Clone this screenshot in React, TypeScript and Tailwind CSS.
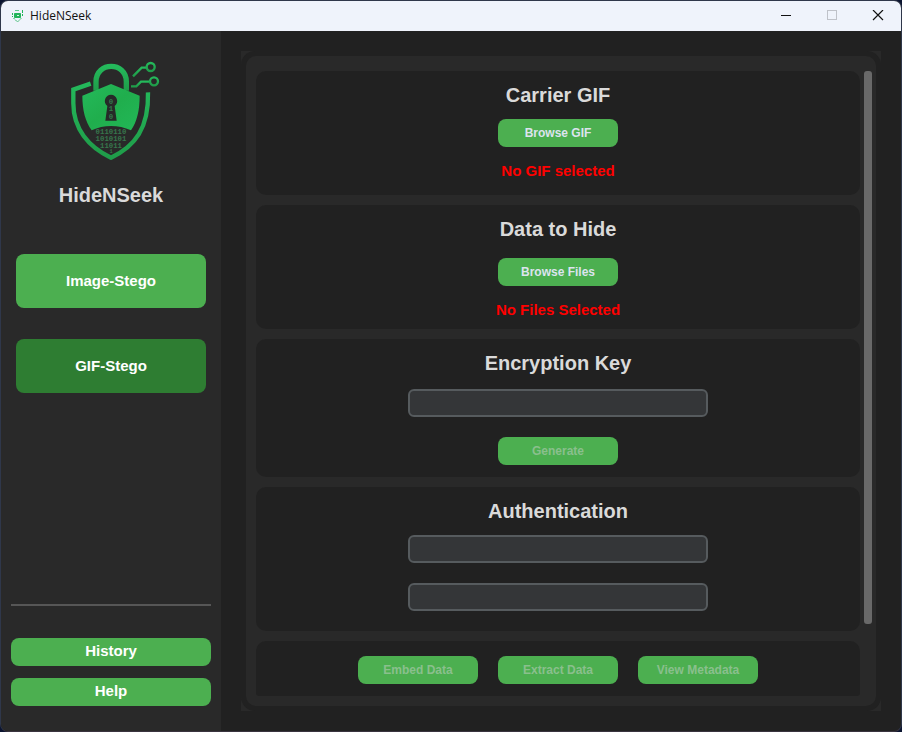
import type { ReactNode } from "react";

function Logo() {
  return (
    <svg viewBox="0 0 336 360" className="h-[120px] w-28 overflow-visible" role="img" aria-label="HideNSeek logo">
      <defs>
        <linearGradient id="shield" x1="0" y1="0" x2="1" y2="1">
          <stop offset="0" stopColor="#24ba5b" />
          <stop offset="0.5" stopColor="#20ae4d" />
          <stop offset="1" stopColor="#22b857" />
        </linearGradient>
        <linearGradient id="line" x1="0" y1="0" x2="0" y2="1">
          <stop offset="0" stopColor="#24b95b" />
          <stop offset="1" stopColor="#1f9c49" />
        </linearGradient>
      </defs>
      <g fill="none" stroke="url(#line)">
        <path d="M107 101 L55 119 V160 C55 236 100 291 168 323 C240 289 282 234 279 127" strokeWidth="13" />
        <path d="M123 122 V95 C123 34 214 34 214 95 V122" strokeWidth="16" />
        <path d="M234 79 L260 53 H274" strokeWidth="7" />
        <circle cx="287" cy="51" r="12" strokeWidth="7" />
        <path d="M228 109 H244 L258 95 H283" strokeWidth="7" />
        <circle cx="297" cy="94" r="12" strokeWidth="7" />
      </g>
      <g
        fontFamily="'Liberation Mono', 'Courier New', monospace"
        fontWeight="700"
        fontSize="22"
        textAnchor="middle"
        fill="#37764c"
      >
        <text x="168" y="251">0110110</text>
        <text x="168" y="273">1010101</text>
        <text x="168" y="294">11011</text>
        <text x="168" y="309" fontSize="16">1</text>
      </g>
      <path
        d="M168 102 L254 137 C254 181 246 215 228 241 C190 224 146 224 110 241 C91 214 82 181 82 137 Z"
        fill="url(#shield)"
      />
      <path d="M168 134 a19 19 0 0 1 11 34 L185 212 H151 L157 168 a19 19 0 0 1 11 -34 Z" fill="#262a28" />
      <g
        fontFamily="'Liberation Mono', 'Courier New', monospace"
        fontWeight="700"
        fontSize="22"
        textAnchor="middle"
        fill="#357a4c"
      >
        <text x="168" y="161">0</text>
        <text x="168" y="183">1</text>
        <text x="168" y="206">0</text>
      </g>
    </svg>
  );
}

function AppIcon() {
  return (
    <svg viewBox="0 0 12 13" className="h-[13px] w-3" fill="none" stroke="#22b45a" aria-hidden="true">
      <path d="M3 0.5 H7" strokeOpacity="0.7" />
      <path d="M2.5 3.5 H8.5 V7.5 H2.5 Z" fill="#22b45a" />
      <path d="M0.5 3 V7 M10.5 4 V7" strokeDasharray="2 1" />
      <path d="M1.5 8 L5.5 12 L9.5 8" strokeDasharray="2 1" />
      <path d="M10.5 0 V3" />
      <path d="M5 5.5 H7" stroke="#d5f5e0" />
    </svg>
  );
}

function CaptionButton({ label, disabled, children }: { label: string; disabled?: boolean; children: ReactNode }) {
  return (
    <button type="button" aria-label={label} disabled={disabled} className="flex w-[46px] items-center justify-center">
      <svg viewBox="0 0 12 12" className="h-3 w-3" fill="none" stroke={disabled ? "#bfc2c9" : "#111111"} aria-hidden="true">
        {children}
      </svg>
    </button>
  );
}

function ActionButton({ children, disabled }: { children: ReactNode; disabled?: boolean }) {
  return (
    <button
      type="button"
      disabled={disabled}
      className="h-7 w-[120px] rounded-lg bg-[#4caf50] text-xs font-bold text-[#dce4ee] disabled:text-[#8abf8d]"
    >
      {children}
    </button>
  );
}

function Card({ title, className, children }: { title: string; className: string; children: ReactNode }) {
  return (
    <section className={`flex flex-col items-center rounded-[10px] bg-[#212121] pt-2.5 ${className}`}>
      <h2 className="text-xl leading-7 font-bold text-[#dadada]">{title}</h2>
      {children}
    </section>
  );
}

function Status({ children }: { children: ReactNode }) {
  return <p className="mt-2.5 text-[15px] leading-7 font-bold text-[#ff0000]">{children}</p>;
}

function Entry({ label, type }: { label: string; type: string }) {
  return (
    <input
      type={type}
      aria-label={label}
      className="h-7 w-[300px] max-w-full rounded-md border-2 border-[#565b5e] bg-[#343638] px-2 text-xs text-[#dce4ee] outline-none"
    />
  );
}

export default function App() {
  return (
    <div className="flex min-h-screen bg-[#0b1430] font-['Liberation_Sans',Arial,sans-serif]">
      <div className="flex flex-1 flex-col overflow-hidden rounded-lg border border-[#2f374a] border-b-[#3a343f] bg-[#212121]">
        <header className="flex h-[30px] items-stretch justify-between bg-[#eff3fb]">
          <div className="flex items-center gap-1.5 pl-[11px]">
            <AppIcon />
            <span className="font-['Open_Sans','Noto_Sans',sans-serif] text-xs text-[#111111]">HideNSeek</span>
          </div>
          <div className="flex">
            <CaptionButton label="Minimize">
              <path d="M1 5.5 H11" />
            </CaptionButton>
            <CaptionButton label="Maximize" disabled>
              <rect x="1.5" y="0.5" width="9" height="9" />
            </CaptionButton>
            <CaptionButton label="Close">
              <path d="M1 0 L11 10 M11 0 L1 10" strokeWidth="1.2" />
            </CaptionButton>
          </div>
        </header>

        <div className="flex flex-1">
          <aside className="flex w-[220px] shrink-0 flex-col bg-[#292929] px-2.5 pt-[19px] pb-[25px]">
            <div className="flex flex-col items-center">
              <Logo />
              <h1 className="mt-[11px] text-xl leading-7 font-bold text-[#dadada]">HideNSeek</h1>
            </div>
            <nav className="mt-[45px] flex flex-col gap-[31px] px-[5px]">
              <button type="button" className="h-[54px] rounded-lg bg-[#4caf50] text-[15px] font-bold text-white">
                Image-Stego
              </button>
              <button
                type="button"
                aria-current="page"
                className="h-[54px] rounded-lg bg-[#2e7d32] text-[15px] font-bold text-white"
              >
                GIF-Stego
              </button>
            </nav>
            <div className="mt-auto flex flex-col gap-3">
              <hr className="mb-5 border-t-2 border-[#565656]" />
              <button type="button" className="h-7 rounded-lg bg-[#4caf50] pb-0.5 text-[15px] font-bold text-white">
                History
              </button>
              <button type="button" className="h-7 rounded-lg bg-[#4caf50] pb-0.5 text-[15px] font-bold text-white">
                Help
              </button>
            </div>
          </aside>

          <main className="flex flex-1 p-5">
            <div className="flex flex-1 bg-[#292929]">
              <div className="flex flex-1 rounded-[14px] bg-[#212121] p-[5px]">
                <div className="flex flex-1 flex-col gap-2.5 rounded-[10px] bg-[#292929] pt-[15px] pr-1 pb-2.5 pl-2.5">
                  <div className="flex flex-1 gap-1">
                    <div className="flex flex-1 flex-col gap-2.5">
                      <Card title="Carrier GIF" className="pb-2.5">
                        <div className="mt-2.5 flex">
                          <ActionButton>Browse GIF</ActionButton>
                        </div>
                        <Status>No GIF selected</Status>
                      </Card>
                      <Card title="Data to Hide" className="pb-[5px]">
                        <div className="mt-[15px] flex">
                          <ActionButton>Browse Files</ActionButton>
                        </div>
                        <Status>No Files Selected</Status>
                      </Card>
                      <Card title="Encryption Key" className="pb-3">
                        <div className="mt-3 flex flex-col items-center gap-5">
                          <Entry label="Encryption key" type="text" />
                          <ActionButton disabled>Generate</ActionButton>
                        </div>
                      </Card>
                      <Card title="Authentication" className="pb-5">
                        <div className="mt-2.5 flex flex-col items-center gap-5">
                          <Entry label="Username" type="text" />
                          <Entry label="Password" type="password" />
                        </div>
                      </Card>
                    </div>
                    <div className="flex w-2 pb-[7px]">
                      <div className="flex-1 rounded-[3px] bg-[#696969]" />
                    </div>
                  </div>
                  <div className="mr-3 flex justify-center gap-5 rounded-t-[10px] rounded-b-[3px] bg-[#212121] pt-[15px] pb-3">
                    <ActionButton disabled>Embed Data</ActionButton>
                    <ActionButton disabled>Extract Data</ActionButton>
                    <ActionButton disabled>View Metadata</ActionButton>
                  </div>
                </div>
              </div>
            </div>
          </main>
        </div>
      </div>
    </div>
  );
}
